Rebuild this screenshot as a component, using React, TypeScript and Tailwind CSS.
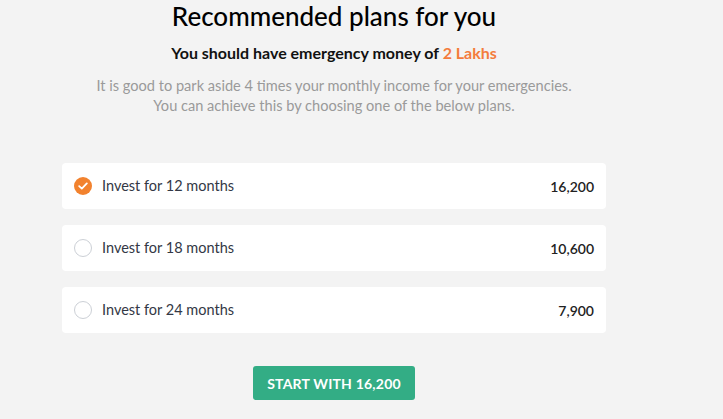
import { useState } from "react";

const plans = [
  { months: 12, amount: "16,200" },
  { months: 18, amount: "10,600" },
  { months: 24, amount: "7,900" },
];

export default function App() {
  const [selected, setSelected] = useState(0);

  return (
    <div
      className="min-h-[419px] bg-[#f3f3f3] text-[#222]"
      style={{ fontFamily: "Lato, 'Noto Sans', sans-serif" }}
    >
      <div className="w-[544px] ml-[62px] flex flex-col items-center">
        <h1 className="text-[26px] leading-[34px] font-medium text-black -mt-[1px]">Recommended plans for you</h1>
        <p className="mt-[10px] text-[16px] leading-[20px] font-bold text-[#111]">
          You should have emergency money of <span className="text-[#f47c3c]">2 Lakhs</span>
        </p>
        <p className="mt-[13px] text-[14.6px] leading-[20px] text-[#9a9a9a] text-center">
          It is good to park aside 4 times your monthly income for your emergencies.
          <br />
          You can achieve this by choosing one of the below plans.
        </p>

        <div className="mt-[47px] w-full flex flex-col gap-[16px]">
          {plans.map((p, i) => (
            <button
              key={p.months}
              onClick={() => setSelected(i)}
              className="h-[46px] w-full bg-white rounded-[4px] flex items-center pl-[12px] pr-[12px] text-left"
            >
              {selected === i ? (
                <span className="w-[18px] h-[18px] rounded-full bg-[#f2822e] flex items-center justify-center">
                  <svg width="10" height="8" viewBox="0 0 10 8" fill="none">
                    <path d="M1.2 4.2 L3.8 6.6 L8.8 1.4" stroke="white" strokeWidth="1.8" strokeLinecap="round" strokeLinejoin="round" />
                  </svg>
                </span>
              ) : (
                <span className="w-[18px] h-[18px] rounded-full border border-[#ccd0d6] bg-white" />
              )}
              <span className="ml-[10px] text-[14.5px] text-[#333845]">Invest for {p.months} months</span>
              <span className="ml-auto text-[14px] font-semibold text-[#222]">{p.amount}</span>
            </button>
          ))}
        </div>

        <button className="mt-[33px] h-[34px] px-[14px] rounded-[3px] bg-[#33ad85] text-white text-[14px] font-bold tracking-[0.2px]">
          START WITH {plans[selected].amount}
        </button>
      </div>
    </div>
  );
}
